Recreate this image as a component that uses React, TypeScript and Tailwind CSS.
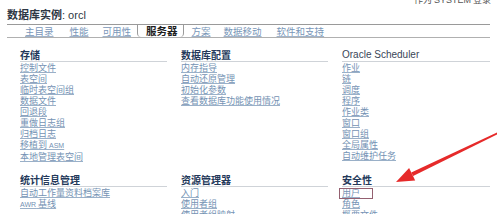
import React from "react";

const linkCls =
  "block text-[9px] leading-[11px] text-[#7492b4] underline decoration-[#9ab0c8] underline-offset-[1px] whitespace-nowrap";

function Small({ children }: { children: React.ReactNode }) {
  return <span className="font-['Liberation_Sans',sans-serif] text-[7px]">{children}</span>;
}

type Item = React.ReactNode;

function Section({ title, latin, items, highlight }: { title: string; latin?: boolean; items: Item[]; highlight?: number }) {
  return (
    <div className="flex flex-col">
      <div
        className={
          latin
            ? "border-b border-[#cfd3d8] text-[10px] leading-[12px] text-[#3a4658] font-['Liberation_Sans',sans-serif] whitespace-nowrap"
            : "border-b border-[#cfd3d8] text-[10px] leading-[12px] font-bold text-[#24395a] whitespace-nowrap"
        }
      >
        {title}
      </div>
      {items.map((it, i) => (
        <div key={i} className="relative">
          <a className={linkCls}>{it}</a>
          {highlight === i && (
            <div className="absolute left-[-3px] top-[1px] w-[34px] h-[11px] border border-[#946070]" />
          )}
        </div>
      ))}
    </div>
  );
}

export default function App() {
  const tabs = [
    { label: "主目录", cls: "ml-[18px]" },
    { label: "性能", cls: "ml-[16px]" },
    { label: "可用性", cls: "ml-[14px]" },
  ];
  const tabs2 = [
    { label: "方案", cls: "ml-[8px]" },
    { label: "数据移动", cls: "ml-[13px]" },
    { label: "软件和支持", cls: "ml-[15px]" },
  ];
  const tabCls = "text-[9.5px] leading-[12px] text-[#7896b8] underline decoration-[#a0b4cc] whitespace-nowrap";
  return (
    <div className="relative w-[497px] h-[214px] overflow-hidden bg-white font-['Noto_Sans_CJK_SC','Noto_Sans',sans-serif]">
      <div className="flex justify-end pr-[6px] h-[7px]">
        <span className="mt-[-5px] text-[9px] leading-[10px] text-[#555] whitespace-nowrap">
          作为 <span className="font-['Liberation_Sans',sans-serif]">SYSTEM</span> 登录
        </span>
      </div>
      <div className="pl-[7px] mt-[1px] text-[11px] leading-[13px] text-[#2e3744] whitespace-nowrap">
        <span className="font-bold">数据库实例</span>
        <span className="font-['Liberation_Sans',sans-serif]">: orcl</span>
      </div>
      <div className="mx-[7px] mt-[2px] h-[14px] border-t border-b border-t-[#9a9a9a] border-b-[#b0b0b0] flex items-stretch">
        {tabs.map((t) => (
          <span key={t.label} className={`${tabCls} ${t.cls} self-center`}>
            {t.label}
          </span>
        ))}
        <span className="ml-[6px] border-l border-r border-[#9a9a9a] rounded-b-[4px] pl-[8px] pr-[5px] flex items-center bg-white">
          <span className="text-[10.5px] leading-[12px] font-bold text-[#1e1e1e] whitespace-nowrap">服务器</span>
        </span>
        {tabs2.map((t) => (
          <span key={t.label} className={`${tabCls} ${t.cls} self-center`}>
            {t.label}
          </span>
        ))}
      </div>

      <div className="grid grid-cols-[147px_147px_148px] gap-x-[14px] pl-[20px] mt-[11px] items-start">
        <Section
          title="存储"
          items={[
            "控制文件",
            "表空间",
            "临时表空间组",
            "数据文件",
            "回退段",
            "重做日志组",
            "归档日志",
            <>移植到 <Small>ASM</Small></>,
            "本地管理表空间",
          ]}
        />
        <Section title="数据库配置" items={["内存指导", "自动还原管理", "初始化参数", "查看数据库功能使用情况"]} />
        <Section
          title="Oracle Scheduler"
          latin
          items={["作业", "链", "调度", "程序", "作业类", "窗口", "窗口组", "全局属性", "自动维护任务"]}
        />
      </div>

      <div className="grid grid-cols-[147px_147px_148px] gap-x-[14px] pl-[20px] mt-[12px] items-start">
        <Section title="统计信息管理" items={["自动工作量资料档案库", <><Small>AWR</Small> 基线</>]} />
        <Section title="资源管理器" items={["入门", "使用者组", "使用者组映射"]} />
        <Section title="安全性" items={["用户", "角色", "概要文件"]} highlight={0} />
      </div>

      <svg className="absolute left-0 top-0" width="497" height="214" viewBox="0 0 497 214">
        <polygon points="499.6,131.4 500.4,132.8 413.1,176.0 411.3,172.4" fill="#e62a2a" />
        <polygon points="396,182 409.1,167.9 415.2,180.5" fill="#e62a2a" />
      </svg>
    </div>
  );
}
